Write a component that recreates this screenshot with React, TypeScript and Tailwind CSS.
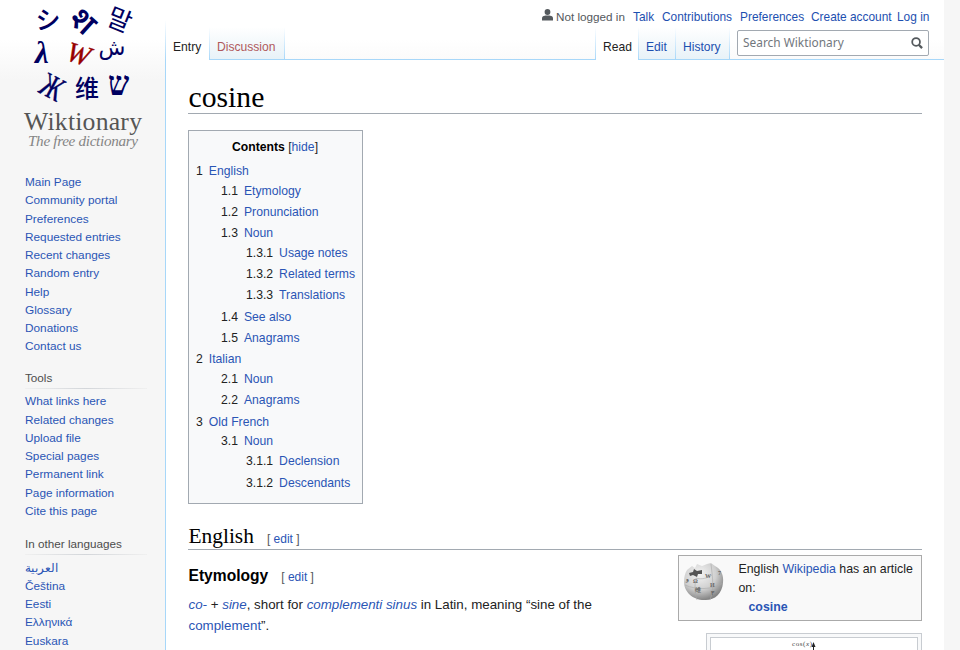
import React from "react";

type Row = { n?: string; t: string; h: string; x?: string };

const mainLinks: Row[] = [
  { t: "Main Page", h: "h-[18px]" },
  { t: "Community portal", h: "h-[19px]" },
  { t: "Preferences", h: "h-[18px]" },
  { t: "Requested entries", h: "h-[18px]" },
  { t: "Recent changes", h: "h-[18px]" },
  { t: "Random entry", h: "h-[19px]" },
  { t: "Help", h: "h-[18px]" },
  { t: "Glossary", h: "h-[18px]" },
  { t: "Donations", h: "h-[18px]" },
  { t: "Contact us", h: "h-[18px]" },
];

const toolLinks: Row[] = [
  { t: "What links here", h: "h-[19px]" },
  { t: "Related changes", h: "h-[18px]" },
  { t: "Upload file", h: "h-[18px]" },
  { t: "Special pages", h: "h-[18px]" },
  { t: "Permanent link", h: "h-[19px]" },
  { t: "Page information", h: "h-[18px]" },
  { t: "Cite this page", h: "h-[18px]" },
];

const languageLinks: Row[] = [
  { t: "العربية", h: "h-[18px]" },
  { t: "Čeština", h: "h-[18px]" },
  { t: "Eesti", h: "h-[18px]" },
  { t: "Ελληνικά", h: "h-[19px]" },
  { t: "Euskara", h: "h-[18px]" },
];

const toc: Row[] = [
  { n: "1", t: "English", h: "h-[20px]", x: "pl-0" },
  { n: "1.1", t: "Etymology", h: "h-[21px]", x: "pl-[25px]" },
  { n: "1.2", t: "Pronunciation", h: "h-[21px]", x: "pl-[25px]" },
  { n: "1.3", t: "Noun", h: "h-[20px]", x: "pl-[25px]" },
  { n: "1.3.1", t: "Usage notes", h: "h-[21px]", x: "pl-[50px]" },
  { n: "1.3.2", t: "Related terms", h: "h-[21px]", x: "pl-[50px]" },
  { n: "1.3.3", t: "Translations", h: "h-[22px]", x: "pl-[50px]" },
  { n: "1.4", t: "See also", h: "h-[21px]", x: "pl-[25px]" },
  { n: "1.5", t: "Anagrams", h: "h-[21px]", x: "pl-[25px]" },
  { n: "2", t: "Italian", h: "h-[20px]", x: "pl-0" },
  { n: "2.1", t: "Noun", h: "h-[21px]", x: "pl-[25px]" },
  { n: "2.2", t: "Anagrams", h: "h-[22px]", x: "pl-[25px]" },
  { n: "3", t: "Old French", h: "h-[19px]", x: "pl-0" },
  { n: "3.1", t: "Noun", h: "h-[20px]", x: "pl-[25px]" },
  { n: "3.1.1", t: "Declension", h: "h-[22px]", x: "pl-[50px]" },
  { n: "3.1.2", t: "Descendants", h: "h-[20px]", x: "pl-[50px]" },
];

function Logo() {
  return (
    <svg width="165" height="160" viewBox="0 0 165 160" className="block">
      <g fill="#000060" textAnchor="middle">
        <text x="48" y="29" fontSize="25" fontWeight="500" fontFamily="'Noto Sans CJK JP', sans-serif">シ</text>
        <text transform="translate(76 29) rotate(42)" fontSize="32" fontWeight="600" fontFamily="'Noto Sans', sans-serif">श</text>
        <text transform="translate(116 28.5) rotate(22)" fontSize="26" fontFamily="'Noto Sans CJK KR', sans-serif">말</text>
        <text x="42" y="63" fontSize="31" fontStyle="italic" fontWeight="700" fontFamily="'Liberation Serif', serif">λ</text>
        <text x="112" y="55" fontSize="22" fontFamily="'DejaVu Sans', sans-serif">ش</text>
        <text transform="translate(47 97) rotate(28) scale(.72 1)" fontSize="34" stroke="#000060" strokeWidth=".4" fontFamily="'Liberation Serif', serif">Ж</text>
        <text x="87" y="97" fontSize="24" fontWeight="500" fontFamily="'Noto Sans CJK SC', sans-serif">维</text>
        <text transform="translate(118.5 95) scale(.88 1)" fontSize="34" fontWeight="700" fontFamily="'Liberation Serif', serif">ש</text>
      </g>
      <text transform="translate(76 63) rotate(17)" textAnchor="middle" fontSize="28" fontStyle="italic" stroke="#970000" strokeWidth=".4" fontFamily="'Liberation Serif', serif" fill="#970000">W</text>
      <text x="24" y="130" textLength="118" fontSize="25.7" fontFamily="'Liberation Serif', serif" fill="#555">Wiktionary</text>
      <text x="28" y="145.5" textLength="110" fontSize="15.2" fontStyle="italic" fontFamily="'Liberation Serif', serif" fill="#858585">The free dictionary</text>
    </svg>
  );
}

function Links({ rows }: { rows: Row[] }) {
  return (
    <ul className="text-[11.8px] text-[#2a55b5]">
      {rows.map((r) => (
        <li key={r.t} className={`${r.h} leading-[18px] whitespace-nowrap`}>{r.t}</li>
      ))}
    </ul>
  );
}

function PortalTitle({ children }: { children: React.ReactNode }) {
  return (
    <>
      <h3 className="h-[19px] text-[11.7px] leading-[18px] text-[#4d4d4d]">{children}</h3>
      <div className="h-px w-[122px] bg-linear-to-r from-[#f0f0f0] via-[#d3d6da] to-[#f0f0f0]" />
    </>
  );
}

function Tab({ label, w, active, red }: { label: string; w: string; active?: boolean; red?: boolean }) {
  return (
    <div className={`${w} relative h-full shrink-0 ${active ? "bg-white" : "border-b border-[#a7d7f9] bg-linear-to-b from-white to-[#e8f2f8]"}`}>
      <div className="absolute top-0 right-0 h-full w-px bg-linear-to-b from-white to-[#a7d7f9]" />
      <div className={`pt-[11px] pl-[7px] text-[12.1px] leading-[18px] whitespace-nowrap ${active ? "text-[#222]" : red ? "text-[#b0595c]" : "text-[#1d50b0]"}`}>{label}</div>
    </div>
  );
}

function Globe() {
  return (
    <svg width="40" height="40" viewBox="0 0 40 40">
      <defs>
        <radialGradient id="globe" cx="0.4" cy="0.3" r="0.7">
          <stop offset="0" stopColor="#f4f4f4" />
          <stop offset="0.6" stopColor="#cfcfcf" />
          <stop offset="1" stopColor="#858585" />
        </radialGradient>
      </defs>
      <path d="M3 7 L8 3 L11 5 L13 1 L18 3 L23 1 L27 0 L31 3 C37 6 40 12 39 20 C38 31 30 38 20 37 C9 37 0 29 0 19 C0 14 1 10 3 7Z" fill="url(#globe)" />
      <path d="M5 10 L9 9 L10 6 L13 8 L18 7 L18 11 L14 11 L13 14 L9 12 L6 13Z" fill="#555" />
      <path d="M12 15 C17 17 24 15 28 12 M13 37 C10 28 11 20 12 15 M26 37 C30 26 29 18 27 1 M1 22 C12 27 28 27 39 20" fill="none" stroke="#aaa" strokeWidth=".6" />
      <g fontFamily="'Liberation Serif', serif" fontSize="6" fontWeight="700" fill="#666">
        <text x="9" y="20">Ω</text><text x="21" y="15">W</text><text x="26" y="24">И</text><text x="11" y="29">维</text><text x="34" y="12">7</text><text x="2" y="18">و</text><text x="27" y="32">٣</text>
      </g>
    </svg>
  );
}

export default function App() {
  return (
    <div className="flex h-[650px] w-[960px] overflow-hidden bg-[#f6f6f6] font-['Liberation_Sans',Arial,sans-serif]">
      <div className="flex h-full w-[165px] shrink-0 flex-col bg-[linear-gradient(to_bottom,#fff_0px,#fff_40px,#f6f6f6_80px)]">
        <div className="h-[160px]"><Logo /></div>
        <nav className="pt-[13px] pl-[25px]">
          <Links rows={mainLinks} />
          <div className="h-[14px]" />
          <PortalTitle>Tools</PortalTitle>
          <div className="h-[3px]" />
          <Links rows={toolLinks} />
          <div className="h-[15px]" />
          <PortalTitle>In other languages</PortalTitle>
          <div className="h-[4px]" />
          <Links rows={languageLinks} />
        </nav>
      </div>
      <div className="w-px shrink-0 bg-[linear-gradient(to_bottom,#fff_20px,#a7d7f9_60px,#a7d7f9_650px)]" />
      <div className="flex w-[778px] shrink-0 flex-col bg-white">
        <header className="flex h-[60px] shrink-0 flex-col bg-[linear-gradient(to_bottom,#fff_0px,#fff_40px,#f6f6f6_80px)]">
          <div className="flex h-[27px] items-start pt-[8px] pl-[376px] text-[11.9px] leading-[18px] whitespace-nowrap text-[#1d50b0]">
            <svg className="mt-px shrink-0" width="11" height="12" viewBox="0 0 11 12" fill="#54595d"><circle cx="5.5" cy="3" r="2.9" /><path d="M0 11.5V9.5c0-2.8 3-3 5.5-3s5.5.2 5.5 3v2z" /></svg>
            <span className="ml-[3px] w-[77px] shrink-0 text-[11.7px] text-[#54595d]">Not logged in</span>
            <span className="w-[29px] shrink-0">Talk</span>
            <span className="w-[78px] shrink-0">Contributions</span>
            <span className="w-[71px] shrink-0">Preferences</span>
            <span className="w-[86px] shrink-0">Create account</span>
            <span>Log in</span>
          </div>
          <div className="flex h-[33px]">
            <Tab label="Entry" w="w-[44px]" active />
            <Tab label="Discussion" w="w-[75px]" red />
            <div className="h-full flex-1 border-b border-[#a7d7f9]" />
            <div className="h-full w-px bg-linear-to-b from-white to-[#a7d7f9]" />
            <Tab label="Read" w="w-[43px]" active />
            <Tab label="Edit" w="w-[37px]" />
            <Tab label="History" w="w-[54px]" />
            <div className="h-full w-[214px] border-b border-[#a7d7f9] pt-[3px] pl-[7px]">
              <div className="flex h-[26px] w-[192px] items-center justify-between rounded-[2px] border border-[#a2a9b1] bg-white pr-[5px] pl-[5px] font-['Noto_Sans',sans-serif] text-[11.9px] text-[#72777d]">
                Search Wiktionary
                <svg width="12" height="12" viewBox="0 0 13 13" fill="none" stroke="#54595d"><circle cx="5.5" cy="5.3" r="4.2" strokeWidth="1.9" /><path d="M8.4 8.4 L12 12" strokeWidth="2.5" /></svg>
              </div>
            </div>
          </div>
        </header>
        <main className="flex flex-col pr-[22px] pl-[22px]">
          <h1 className="h-[54px] border-b border-[#a2a9b1] pt-[20px] pl-[0.5px] font-['Liberation_Serif',serif] text-[29.7px] leading-[34px] text-black">cosine</h1>
          <div className="mt-[16px] h-[374px] w-[175px] border border-[#a2a9b1] bg-[#f8f9fa] pl-[7px] text-[12.2px] whitespace-nowrap text-[#222]">
            <div className="h-[30px] pt-[7px] pl-[36px] leading-[19px]"><b className="text-black">Contents</b> [<span className="text-[#2a55b5]">hide</span>]</div>
            {toc.map((r) => (
              <div key={r.n} className={`${r.h} ${r.x} flex leading-[20px]`}>
                <span className="mr-[6px]">{r.n}</span>
                <span className="text-[#2a55b5]">{r.t}</span>
              </div>
            ))}
          </div>
          <h2 className="flex h-[46px] items-baseline border-b border-[#a2a9b1] pt-[18px] pl-[0.5px] font-['Liberation_Serif',serif] text-[21.4px] leading-[28px] text-black">
            English
            <span className="ml-[13px] font-['Liberation_Sans',sans-serif] text-[12px] text-[#54595d]">[ <span className="text-[#2a55b5]">edit</span> ]</span>
          </h2>
          <div className="flex justify-between">
            <div className="w-[450px] whitespace-nowrap">
              <h3 className="flex items-baseline pt-[14px] pl-[0.5px] text-[15.6px] leading-[24px] font-bold text-black">
                Etymology
                <span className="ml-[13px] text-[12px] font-normal text-[#54595d]">[ <span className="text-[#2a55b5]">edit</span> ]</span>
              </h3>
              <p className="pt-[6px] pl-[0.5px] text-[13.34px] leading-[20.5px] text-[#222]">
                <i className="text-[#2a55b5]">co-</i> + <i className="text-[#2a55b5]">sine</i>, short for <i className="text-[#2a55b5]">complementi sinus</i> in Latin, meaning “sine of the<br />
                <span className="text-[#2a55b5]">complement</span>”.
              </p>
            </div>
            <aside className="flex flex-col items-end">
              <div className="mt-[5px] flex h-[66px] w-[244px] border border-[#aaa] bg-[#f9f9f9] pt-[4px] pl-[5px] text-[12.35px] leading-[19px] whitespace-nowrap text-[#222]">
                <div className="w-[54.5px] pt-[3px]"><Globe /></div>
                <div>
                  English <span className="text-[#2a55b5]">Wikipedia</span> has an article<br />on:<br />
                  <b className="ml-[10px] text-[#2a55b5]">cosine</b>
                </div>
              </div>
              <div className="mt-[12px] h-[40px] w-[216px] border border-[#c8ccd1] bg-[#f8f9fa] p-[3px]">
                <div className="h-[40px] border border-[#c8ccd1] bg-white">
                  <svg width="206" height="30" viewBox="0 0 206 30">
                    <text x="81" y="7.5" fontSize="7" textLength="20" fontFamily="'Liberation Serif', serif" fill="#444">cos(<tspan fontStyle="italic">x</tspan>)</text>
                    <path d="M102.5 6V30" stroke="#222" /><path d="M100.5 9l2-5 2 5z" fill="#222" />
                  </svg>
                </div>
              </div>
            </aside>
          </div>
        </main>
      </div>
    </div>
  );
}
